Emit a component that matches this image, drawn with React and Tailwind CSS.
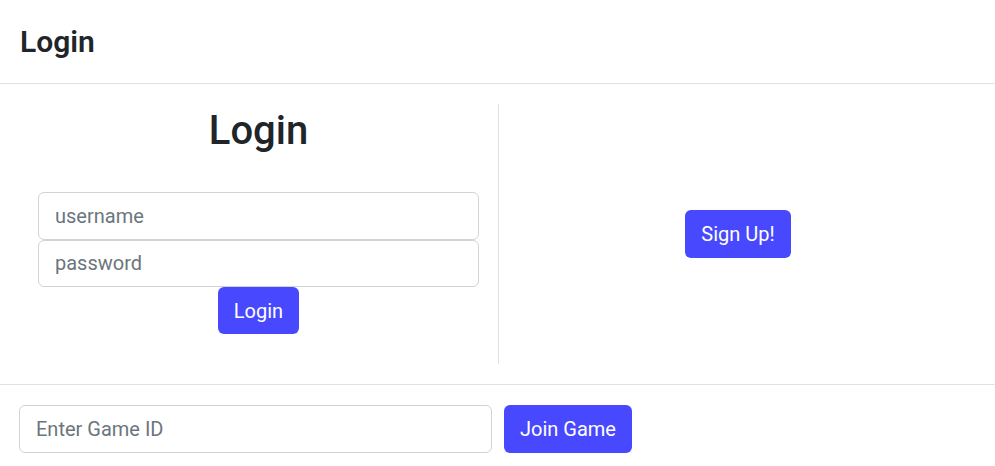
export default function App() {
  return (
    <div className="min-h-screen bg-white text-[#212529] font-['Roboto',sans-serif]">
      {/* Header */}
      <header className="h-[84px] flex items-center px-5 border-b border-[#dee2e6]">
        <h3 className="text-[30px] font-semibold leading-[1.2]">Login</h3>
      </header>

      {/* Main */}
      <main className="grid grid-cols-[481px_1fr] px-[18px] py-5 border-b border-[#dee2e6]">
        <div className="min-w-0 h-[260px] flex flex-col items-center border-r border-[#dee2e6] pl-5 pr-[19px] pt-[3px]">
          <h1 className="text-[40px] font-medium leading-[1.2]">Login</h1>
          <form className="w-full mt-[37px] flex flex-col items-center">
            <input
              placeholder="username"
              className="w-full h-[47.5px] px-4 text-xl rounded-md border border-[#ced4da] placeholder:text-[#6c757d] outline-none"
            />
            <input
              type="password"
              placeholder="password"
              className="w-full h-[47.5px] px-4 text-xl rounded-md border border-[#ced4da] placeholder:text-[#6c757d] outline-none"
            />
            <button
              type="button"
              className="h-[47px] px-4 text-xl text-white bg-[#4848ff] rounded-md"
            >
              Login
            </button>
          </form>
        </div>
        <div className="min-w-0 h-[260px] flex items-center justify-center">
          <button className="h-12 px-4 text-xl text-white bg-[#4848ff] rounded-md">
            Sign Up!
          </button>
        </div>
      </main>

      {/* Join game */}
      <div className="flex items-center gap-3 px-[19px] pt-5">
        <input
          placeholder="Enter Game ID"
          className="w-[473px] h-12 px-4 text-xl rounded-md border border-[#ced4da] placeholder:text-[#6c757d] outline-none"
        />
        <button className="h-12 px-4 text-xl text-white bg-[#4848ff] rounded-md">
          Join Game
        </button>
      </div>
    </div>
  );
}
